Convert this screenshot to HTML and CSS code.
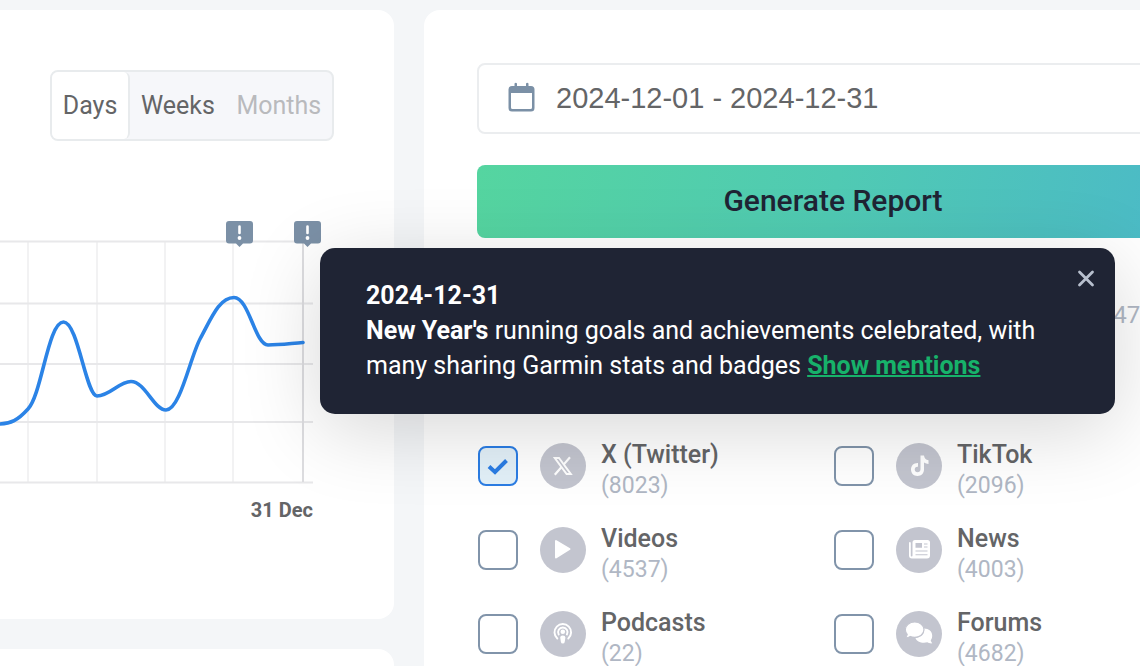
FILE: index.html
```html
<!DOCTYPE html>
<html lang="en">
<head>
<meta charset="utf-8">
<title>Report</title>
<link rel="stylesheet" href="styles.css">
</head>
<body>
<main class="dashboard">
  <div class="charts">
    <section class="card chart-card">
      <div class="segments" role="group" aria-label="Interval">
        <button type="button" class="segment segment-active" aria-pressed="true">Days</button>
        <button type="button" class="segment">Weeks</button>
        <button type="button" class="segment" disabled>Months</button>
      </div>
      <svg class="chart" viewBox="0 221 326 264" width="326" height="264" role="img" aria-label="Mentions per day">
        <g fill="none" stroke-width="2">
          <path stroke="#f2f2f3" d="M28 241V482M97 241V482M165 241V482M233 241V482"/>
          <path stroke="#e8e8ea" d="M0 241.500H303M0 303.500H313M0 364H313M0 422H313M0 482.500H313"/>
          <path stroke="#dddde0" d="M303 241V482"/>
        </g>
        <path fill="none" stroke="#2b83e6" stroke-width="3.600" stroke-linecap="round" stroke-linejoin="round" d="M-2 424C11 424 18 420 28 409C42 394 48 322 63.500 322C78 322 86 396 97 396C110 396 119 381.500 131 381.500C145 381.500 154 410 166 410C180 410 190 358 200 339C211 319 219 297.500 234 297.500C249 297.500 255 345 268 345C280 345 290 343.500 303 342.500"/>
        <g fill="#7b90a6">
          <path d="M229 221H250Q253 221 253 224V240.500Q253 243.500 250 243.500H243L239.500 247L236 243.500H229Q226 243.500 226 240.500V224Q226 221 229 221Z"/>
          <path d="M297 221H318Q321 221 321 224V240.500Q321 243.500 318 243.500H311L307.500 247L304 243.500H297Q294 243.500 294 240.500V224Q294 221 297 221Z"/>
        </g>
        <path stroke="#fff" stroke-width="2.600" stroke-linecap="round" d="M239.500 226.500V233M307.500 226.500V233"/>
        <g fill="#fff"><circle cx="239.500" cy="238" r="1.900"/><circle cx="307.500" cy="238" r="1.900"/></g>
      </svg>
      <div class="axis-label">31 Dec</div>
    </section>
    <section class="card next-card"></section>
  </div>

  <form class="card report">
    <label class="date-field">
      <svg width="28" height="34" viewBox="0 0 28 34" aria-hidden="true">
        <path fill="#7b90a6" d="M6.500 1.500Q7.750 0 9 1.500V4H18V1.500Q19.250 0 20.500 1.500V4H23Q26.500 4 26.500 7.500V26Q26.500 29.500 23 29.500H4Q0.500 29.500 0.500 26V7.500Q0.500 4 4 4H6.500ZM3 11V25.500Q3 27 4.500 27H22.500Q24 27 24 25.500V11Z"/>
      </svg>
      <input class="date-input" type="text" aria-label="Date range" value="2024-12-01 - 2024-12-31">
    </label>
    <button type="button" class="generate">Generate Report</button>
    <div class="total">(47098)</div>
    <div class="sources">
      <label class="source">
        <input type="checkbox" class="check" checked>
        <svg class="source-icon" viewBox="0 0 46 46" aria-hidden="true">
          <g fill="none" stroke="#fff"><path stroke-width="2" d="M14.800 15H19L30.800 31H26.600Z"/><path stroke-width="2.200" d="M30 14.200L23.800 21.400M21.300 24.200L14.800 31.800"/></g>
        </svg>
        <span class="source-text"><span class="source-name">X (Twitter)</span><span class="source-count">(8023)</span></span>
      </label>
      <label class="source">
        <input type="checkbox" class="check">
        <svg class="source-icon" viewBox="0 0 46 46" aria-hidden="true">
          <path fill="#fff" d="M24.500 12.500H28C28.300 15.300 29.800 16.900 32.500 17.200V21C30.800 21 29.300 20.500 28 19.600V26.500C28 30.200 25.300 33 21.500 33C17.700 33 15 30.200 15 26.500C15 22.600 18 19.700 22 20V23.800C19.900 23.500 18.700 24.800 18.700 26.500C18.700 28.100 19.900 29.300 21.500 29.300C23.300 29.300 24.500 28.100 24.500 26Z"/>
        </svg>
        <span class="source-text"><span class="source-name">TikTok</span><span class="source-count">(2096)</span></span>
      </label>
      <label class="source">
        <input type="checkbox" class="check">
        <svg class="source-icon" viewBox="0 0 46 46" aria-hidden="true">
          <path fill="#fff" stroke="#fff" stroke-width="2" stroke-linejoin="round" d="M16 14V30.500L29.500 22Z"/>
        </svg>
        <span class="source-text"><span class="source-name">Videos</span><span class="source-count">(4537)</span></span>
      </label>
      <label class="source">
        <input type="checkbox" class="check">
        <svg class="source-icon" viewBox="0 0 46 46" aria-hidden="true">
          <path fill="#fff" fill-rule="evenodd" d="M19 13H31.500Q34 13 34 15.500V28.500Q34 31.500 31 31.500H16Q13 31.500 13 28.500V16Q13 15 13.900 15Q14.800 15 14.800 16V28.500Q14.800 29.600 15.600 29.600Q16.500 29.600 16.500 28.500V15.500Q16.500 13 19 13ZM19.500 16V20.800H26V16ZM28 16.500V17.500H31.500V16.500ZM28 19.500V20.500H31.500V19.500ZM19.500 23.500V24.500H31.500V23.500ZM19.500 27.200V28.200H31.500V27.200Z"/>
        </svg>
        <span class="source-text"><span class="source-name">News</span><span class="source-count">(4003)</span></span>
      </label>
      <label class="source">
        <input type="checkbox" class="check">
        <svg class="source-icon" viewBox="0 0 46 46" aria-hidden="true">
          <g fill="none" stroke="#fff" stroke-width="1.900" stroke-linecap="round"><path d="M17.300 27.500A8.300 8.300 0 1 1 28.300 27.500"/><path d="M18.700 23.500A4.700 4.700 0 1 1 26.900 23.500"/></g>
          <circle cx="22.800" cy="20.700" r="2.300" fill="#fff"/>
          <path fill="#fff" d="M20.200 26.500Q20.200 24.500 22.800 24.500Q25.400 24.500 25.400 26.500L24.700 31Q24.500 32.500 22.800 32.500Q21.100 32.500 20.900 31Z"/>
        </svg>
        <span class="source-text"><span class="source-name">Podcasts</span><span class="source-count">(22)</span></span>
      </label>
      <label class="source">
        <input type="checkbox" class="check">
        <svg class="source-icon" viewBox="0 0 46 46" aria-hidden="true">
          <path fill="#fff" d="M28 17.500C33 17.500 36.200 20.500 36.200 24.500C36.200 26.500 35.700 28 34.700 29.300C35 30.500 35.600 31.500 36.300 32.300C34.500 32.700 32.600 32 31.400 31.300C26 32.800 20.500 30.500 19.500 27C25 26.500 29 23 28 17.500Z"/>
          <path fill="#fff" stroke="#c3c5cf" stroke-width="1.200" d="M18.700 11C24 11 28 14.300 28 18.600C28 23 23.600 26.300 18.700 26.300C17 26.300 15.500 26 14.200 25.500C12.800 26.500 11 27 9.200 26.800C10.300 25.700 11 24.500 11.200 23.300C10 22 9.300 20.400 9.300 18.600C9.300 14.300 13.500 11 18.700 11Z"/>
        </svg>
        <span class="source-text"><span class="source-name">Forums</span><span class="source-count">(4682)</span></span>
      </label>
    </div>
  </form>
</main>

<aside class="tooltip" role="dialog" aria-label="2024-12-31">
  <button type="button" class="close" aria-label="Close">
    <svg width="18" height="18" viewBox="0 0 18 18" aria-hidden="true"><path stroke="#b7bfcd" stroke-width="2.800" stroke-linecap="round" d="M2.500 3L15.500 16M15.500 3L2.500 16"/></svg>
  </button>
  <strong class="tooltip-date">2024-12-31</strong>
  <p class="tooltip-text"><strong>New Year's</strong> running goals and achievements celebrated, with many sharing Garmin stats and badges <a class="mentions" href="#">Show mentions</a></p>
</aside>
</body>
</html>
```
FILE: styles.css
```css
* {
  box-sizing: border-box;
}

body {
  position: relative;
  margin: 0;
  height: 100vh;
  overflow: hidden;
  background: #f4f6f8;
  color: #646567;
  font-family: Roboto, "Liberation Sans", sans-serif;
  font-size: 25px;
}

button,
input {
  margin: 0;
  font: inherit;
  color: inherit;
}

.dashboard {
  display: flex;
  gap: 30px;
  min-height: 100%;
  padding-top: 10px;
}

.card {
  background: #fff;
}

.charts {
  display: flex;
  flex-direction: column;
  flex: 0 0 394px;
  gap: 30px;
}

.chart-card {
  padding: 60px 0 94px;
  border-radius: 0 16px 16px 0;
}

.next-card {
  flex: 1;
  min-height: 60px;
  border-radius: 0 16px 0 0;
}

.segments {
  display: flex;
  width: 284px;
  height: 71px;
  margin-left: 50px;
  border: 2px solid #e8ebed;
  border-radius: 8px;
  background: #f6f7fa;
}

.segment {
  flex: auto;
  padding: 0;
  border: 0;
  background: none;
}

.segment:disabled {
  color: #b9babd;
}

.segment-active {
  border-right: 2px solid #e8ebed;
  border-radius: 6px;
  background: #fff;
}

.chart {
  display: block;
  margin-top: 80px;
}

.axis-label {
  width: 313px;
  margin-top: 10px;
  font-size: 20px;
  font-weight: 700;
  line-height: 30px;
  text-align: right;
}

.report {
  display: flex;
  flex-direction: column;
  flex: 1;
  margin-right: -102px;
  padding: 53px;
  border-radius: 16px 0 0 0;
}

.date-field {
  display: flex;
  align-items: center;
  gap: 20px;
  height: 71px;
  padding: 0 29px;
  border: 2px solid #ebedef;
  border-radius: 8px;
}

.date-input {
  flex: 1;
  min-width: 0;
  padding: 0;
  border: 0;
  outline: 0;
  background: none;
  font-family: "Liberation Sans", Arial, sans-serif;
  font-size: 29px;
}

.generate {
  height: 73px;
  margin-top: 31px;
  padding: 0 0 3px;
  border: 0;
  border-radius: 8px;
  background: linear-gradient(100deg, #55d5a0, #50cab3 50%, #4bb9c8);
  color: #1f2434;
  font-size: 30px;
  font-weight: 500;
}

.total {
  margin-top: 61px;
  color: #b0b7c4;
  font-size: 24px;
  line-height: 32px;
  text-align: right;
}

.sources {
  display: grid;
  grid-template-columns: 1fr 1fr;
  grid-auto-rows: 84px;
  margin-top: 93px;
}

.source {
  display: flex;
  align-items: center;
}

.check {
  appearance: none;
  width: 40px;
  height: 40px;
  margin: 0 22px 0 1px;
  border: 2px solid #8194aa;
  border-radius: 8px;
}

.check:checked {
  border-color: #2b7de4;
  background: #e2f0f8 url("data:image/svg+xml,%3Csvg xmlns='http://www.w3.org/2000/svg' viewBox='0 0 36 36'%3E%3Cpath d='M9 18.500L15 24L26.500 12.500' fill='none' stroke='%232b7de4' stroke-width='4'/%3E%3C/svg%3E");
}

.source-icon {
  width: 46px;
  height: 46px;
  border-radius: 50%;
  background: #c3c5cf;
}

.source-text {
  display: flex;
  flex-direction: column;
  margin-left: 15px;
  padding-top: 8px;
  line-height: 31px;
}

.source-name {
  font-weight: 500;
}

.source-count {
  color: #b0b7c4;
  font-size: 23px;
}

.tooltip {
  position: absolute;
  top: 248px;
  left: 320px;
  right: 25px;
  padding: 30px 60px 31px 46px;
  border-radius: 15px;
  background: #1f2434;
  box-shadow: 0 16px 80px rgba(0, 0, 0, 0.16);
  color: #fff;
  line-height: 35px;
}

.tooltip-date {
  display: block;
}

.tooltip-text {
  margin: 0;
}

.mentions {
  color: #17b26a;
  font-weight: 700;
  text-decoration-thickness: 2px;
}

.close {
  position: absolute;
  top: 21px;
  right: 20px;
  display: flex;
  padding: 0;
  border: 0;
  background: none;
}
```
